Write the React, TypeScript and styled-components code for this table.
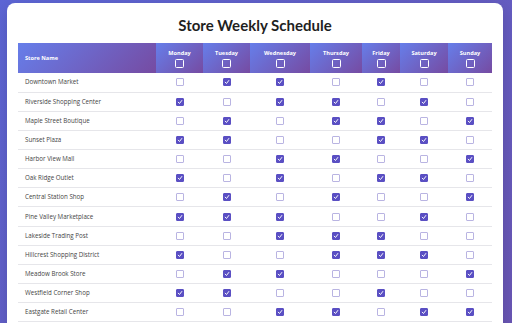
import React from "react";
import styled, { createGlobalStyle } from "styled-components";

const Global = createGlobalStyle`
  html, body { margin: 0; padding: 0; }
  body {
    background: linear-gradient(135deg, #5d66d6 0%, #6a56b4 100%);
    min-height: 323px;
    font-family: "Open Sans", "Noto Sans", sans-serif;
    overflow: hidden;
  }
`;

const Page = styled.div`
  padding: 3px 9px 0 7px;
`;

const Card = styled.div`
  background: #fff;
  border-radius: 8px 8px 0 0;
  padding: 12px 11px 20px 11px;
  box-shadow: 0 4px 16px rgba(0, 0, 0, 0.15);
`;

const Title = styled.h1`
  margin: 0 0 8px;
  text-align: center;
  font-family: Lato, "Open Sans", sans-serif;
  font-size: 15px;
  line-height: 20px;
  font-weight: 700;
  color: #1f1f1f;
`;

const Table = styled.table`
  width: 474px;
  border-collapse: collapse;
  table-layout: fixed;
`;

const Th = styled.th<{ $left?: boolean; $w: number }>`
  background: linear-gradient(135deg, #667eea 0%, #764ba2 100%);
  color: #fff;
  font-size: 5.6px;
  font-weight: 700;
  height: 30px;
  padding: 0;
  width: ${(p) => p.$w}px;
  text-align: ${(p) => (p.$left ? "left" : "center")};
  padding-left: ${(p) => (p.$left ? "7px" : "0")};
  vertical-align: middle;
  box-sizing: border-box;
`;

const DayHead = styled.div`
  display: flex;
  flex-direction: column;
  align-items: center;
  gap: 2px;
  line-height: 8px;
`;

const HeadBox = styled.span`
  display: block;
  width: 7px;
  height: 7px;
  border: 1.2px solid #fff;
  border-radius: 1.5px;
`;

const Tr = styled.tr`
  height: 19.15px;
  border-bottom: 1px solid #e6e6ea;
`;

const NameTd = styled.td`
  font-size: 6.2px;
  line-height: 8px;
  color: #444;
  padding: 0 0 0 7px;
  vertical-align: middle;
`;

const Td = styled.td`
  text-align: center;
  vertical-align: middle;
  padding: 0;
  font-size: 0;
  line-height: 0;
`;

const Box = styled.span<{ $on: boolean }>`
  display: inline-flex;
  align-items: center;
  justify-content: center;
  box-sizing: border-box;
  width: 8px;
  height: 8px;
  border-radius: 1px;
  vertical-align: middle;
  border: 1px solid ${(p) => (p.$on ? "#5a4fc3" : "#b9b4e2")};
  background: ${(p) => (p.$on ? "#5a4fc3" : "#fff")};
`;

const days = ["Monday", "Tuesday", "Wednesday", "Thursday", "Friday", "Saturday", "Sunday"];
const widths = [47, 47, 60, 52, 38, 48, 44];

const stores: [string, string][] = [
  ["Downtown Market", "0110100"],
  ["Riverside Shopping Center", "1011010"],
  ["Maple Street Boutique", "0101101"],
  ["Sunset Plaza", "1100110"],
  ["Harbor View Mall", "0011001"],
  ["Oak Ridge Outlet", "1010110"],
  ["Central Station Shop", "0101001"],
  ["Pine Valley Marketplace", "1110010"],
  ["Lakeside Trading Post", "0011100"],
  ["Hillcrest Shopping District", "1001110"],
  ["Meadow Brook Store", "0110001"],
  ["Westfield Corner Shop", "1100100"],
  ["Eastgate Retail Center", "0011011"],
];

const Check = () => (
  <svg width="6" height="6" viewBox="0 0 10 10">
    <path d="M2 5.3 L4.2 7.5 L8 2.5" fill="none" stroke="#fff" strokeWidth="1.6" strokeLinecap="round" strokeLinejoin="round" />
  </svg>
);

export default function App() {
  return (
    <>
      <Global />
      <Page>
        <Card>
          <Title>Store Weekly Schedule</Title>
          <Table>
            <thead>
              <tr>
                <Th $left $w={138}>Store Name</Th>
                {days.map((d, i) => (
                  <Th key={d} $w={widths[i]}>
                    <DayHead>
                      {d}
                      <HeadBox />
                    </DayHead>
                  </Th>
                ))}
              </tr>
            </thead>
            <tbody>
              {stores.map(([name, pattern]) => (
                <Tr key={name}>
                  <NameTd>{name}</NameTd>
                  {pattern.split("").map((c, i) => (
                    <Td key={i}>
                      <Box $on={c === "1"}>{c === "1" && <Check />}</Box>
                    </Td>
                  ))}
                </Tr>
              ))}
            </tbody>
          </Table>
        </Card>
      </Page>
    </>
  );
}
